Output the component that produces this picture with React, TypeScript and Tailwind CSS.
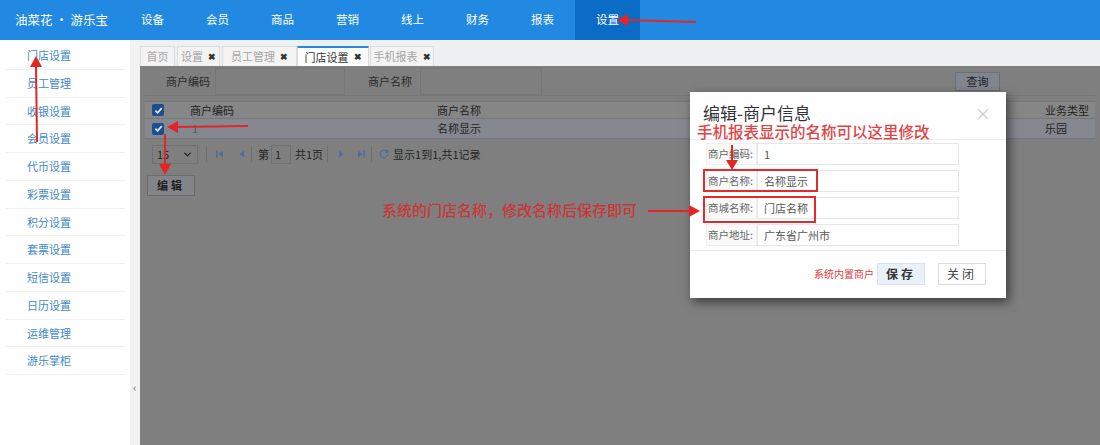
import React from 'react';
import { RotateCw, ChevronDown } from 'lucide-react';

const NAV = ['设备', '会员', '商品', '营销', '线上', '财务', '报表', '设置'];
const MENU = ['门店设置', '员工管理', '收银设置', '会员设置', '代币设置', '彩票设置', '积分设置', '套票设置', '短信设置', '日历设置', '运维管理', '游乐掌柜'];

const TABS = [
  { label: '首页', w: 'w-[35px]', close: false, active: false },
  { label: '设置', w: 'w-[43px]', close: true, active: false },
  { label: '员工管理', w: 'w-[75px]', close: true, active: false },
  { label: '门店设置', w: 'w-[72px]', close: true, active: true },
  { label: '手机报表', w: 'w-[64px]', close: true, active: false },
];

const FORM = [
  { label: '商户编码:', value: '1' },
  { label: '商户名称:', value: '名称显示' },
  { label: '商城名称:', value: '门店名称' },
  { label: '商户地址:', value: '广东省广州市' },
];

function Check() {
  return (
    <span className="w-[12px] h-[12px] rounded-[2px] bg-[#1d4e92] flex items-center justify-center">
      <svg width="9" height="9" viewBox="0 0 10 10">
        <path d="M1.5 5.2 L4 7.6 L8.6 2.4" stroke="#e8e8e8" strokeWidth="1.8" fill="none" />
      </svg>
    </span>
  );
}

function Tri({ dir, bar }: { dir: 'l' | 'r'; bar?: boolean }) {
  return (
    <svg width="10" height="10" viewBox="0 0 10 10">
      {dir === 'l' ? (
        <>
          {bar && <rect x="1" y="1.5" width="1.6" height="7" fill="#4f6f94" />}
          <polygon points="8,1.5 3.5,5 8,8.5" fill="#4f6f94" />
        </>
      ) : (
        <>
          <polygon points="2,1.5 6.5,5 2,8.5" fill="#4f6f94" />
          {bar && <rect x="7.4" y="1.5" width="1.6" height="7" fill="#4f6f94" />}
        </>
      )}
    </svg>
  );
}

export default function App() {
  return (
    <div className="relative w-[1100px] h-[445px] overflow-hidden bg-white font-['Noto_Sans_CJK_SC',sans-serif]">
      {/* 顶部导航 */}
      <header className="h-[40px] bg-[#2289e2] flex text-white">
        <div className="w-[120px] flex items-center pl-[15px] text-[12.5px]">油菜花 · 游乐宝</div>
        {NAV.map((n) => (
          <div
            key={n}
            className={`w-[65px] flex items-center justify-center text-[11.5px] ${n === '设置' ? 'bg-[#0b6cc6]' : ''}`}
          >
            {n}
          </div>
        ))}
      </header>

      <div className="flex h-[405px]">
        {/* 左侧菜单 */}
        <aside className="w-[130px] bg-white pt-[2px] px-[5px]">
          {MENU.map((m) => (
            <div key={m} className="h-[27.75px] border-b border-[#f1f1f1] flex items-center pl-[22px] text-[11px] text-[#4189c9]">
              {m}
            </div>
          ))}
        </aside>
        <div className="w-[10px] bg-[#f2f2f2] pt-[342px] text-[11px] text-[#666] leading-none pl-[3px]">‹</div>

        {/* 主体 */}
        <main className="flex-1 flex flex-col bg-[#eef0f2]">
          <div className="h-[26px] flex items-end">
            {TABS.map((t, i) => (
              <div
                key={t.label}
                className={`${t.w} h-[20px] flex items-center justify-center gap-[5px] text-[11px] border-x border-[#dcdcdc] ${
                  t.active ? 'bg-white border-t-2 border-t-[#2289e2] text-[#333]' : 'bg-[#f3f3f3] border-t border-t-[#dcdcdc] text-[#a5a5a5]'
                } ${i === 1 ? 'ml-[2px]' : ''} ${i === 2 ? 'ml-[2px]' : ''} ${i === 4 ? 'ml-[1px]' : ''}`}
              >
                <span>{t.label}</span>
                {t.close && <span className="text-[9px] font-bold text-[#333]">✖</span>}
              </div>
            ))}
          </div>

          {/* 内容区（遮罩状态） */}
          <div className="relative flex-1 bg-[#7f7f7f] text-[11px] text-[#222]">
            <div className="mt-[2px] mx-[5px] h-[28px] flex items-center border-b border-[#777]">
              <div className="w-[70px] h-full flex items-center justify-end pr-[5px] text-[#2a2a2a]">商户编码</div>
              <div className="w-[130px] h-full border border-[#757575]" />
              <div className="w-[75px] h-full flex items-center justify-end pr-[8px] text-[#2a2a2a]">商户名称</div>
              <div className="w-[122px] h-full border border-[#757575]" />
              <div className="flex-1" />
              <div className="w-[45px] h-[19px] mr-[95px] bg-[#808690] border border-[#6f6f6f] flex items-center justify-center text-[#1d1d1d]">查询</div>
            </div>

            <div className="mt-[5px] mx-[5px]">
              <div className="h-[18px] flex items-center bg-[#868686] border-y border-[#777]">
                <div className="w-[45px] pl-[7px]"><Check /></div>
                <div className="w-[247px]">商户编码</div>
                <div className="flex-1">商户名称</div>
                <div className="w-[50px]">业务类型</div>
              </div>
              <div className="h-[20px] flex items-center bg-[#858891] border-b border-[#777]">
                <div className="w-[45px] pl-[7px]"><Check /></div>
                <div className="w-[247px] pl-[2px] text-[#5d5d5d]">1</div>
                <div className="flex-1">名称显示</div>
                <div className="w-[50px]">乐园</div>
              </div>
            </div>

            <div className="mt-[4px] ml-[12px] h-[22px] flex items-center text-[#242424]">
              <div className="w-[46px] h-[19px] border border-[#707070] flex items-center justify-between px-[4px]">
                <span>15</span>
                <ChevronDown size={11} strokeWidth={3} color="#222" />
              </div>
              <div className="w-px h-[16px] bg-[#6e6e6e] ml-[8px]" />
              <div className="ml-[8px]"><Tri dir="l" bar /></div>
              <div className="ml-[11px]"><Tri dir="l" /></div>
              <div className="w-px h-[16px] bg-[#6e6e6e] ml-[5px]" />
              <span className="ml-[6px]">第</span>
              <div className="ml-[2px] w-[20px] h-[19px] border border-[#707070] flex items-center pl-[3px]">1</div>
              <span className="ml-[4px]">共1页</span>
              <div className="w-px h-[16px] bg-[#6e6e6e] ml-[4px]" />
              <div className="ml-[9px]"><Tri dir="r" /></div>
              <div className="ml-[9px]"><Tri dir="r" bar /></div>
              <div className="w-px h-[16px] bg-[#6e6e6e] ml-[5px]" />
              <RotateCw size={10} strokeWidth={3} color="#4f6f94" className="ml-[7px]" />
              <span className="ml-[4px]">显示1到1,共1记录</span>
            </div>

            <div className="mt-[10px] ml-[7px] w-[48px] h-[21px] bg-[#828488] border border-[#6b6b6b] flex items-center justify-center font-bold text-[#1e1e1e] tracking-[3px]">
              编辑
            </div>

            {/* 弹窗 */}
            <div className="absolute left-[550px] top-[26px] w-[316px] h-[206px] bg-white shadow-[3px_4px_10px_rgba(0,0,0,0.55)] flex flex-col">
              <div className="h-[48px] border-b border-[#ececec] flex items-start justify-between px-[13px] pt-[9px]">
                <span className="text-[17px] leading-[24px] text-[#333]">编辑-商户信息</span>
                <span className="text-[16px] leading-[24px] text-[#c8c8c8] mr-[2px]">×</span>
              </div>
              <div className="flex flex-col gap-[5px] pt-[3px] pl-[16px] h-[110px]">
                {FORM.map((f) => (
                  <div key={f.label} className="flex h-[22px]">
                    <div className="w-[51px] bg-[#fafafa] border border-[#efefef] flex items-center justify-end pr-[3px] text-[10.5px] text-[#666]">
                      {f.label}
                    </div>
                    <div className="w-[202px] border border-[#e6e6e6] flex items-center pl-[6px] text-[11px] text-[#555]">{f.value}</div>
                  </div>
                ))}
              </div>
              <div className="border-t border-[#ececec] flex-1 flex items-center justify-end pr-[20px] pb-[2px]">
                <span className="text-[10px] text-[#e03a3a] mr-[3px]">系统内置商户</span>
                <div className="w-[48px] h-[22px] bg-[#e9f1fb] border border-[#d9e2ee] flex items-center justify-center text-[12px] font-bold text-[#333] tracking-[3px]">保存</div>
                <div className="w-[48px] h-[22px] ml-[13px] bg-white border border-[#ddd] flex items-center justify-center text-[12px] text-[#444] tracking-[3px]">关闭</div>
              </div>

              {/* 红框标注 */}
              <div className="absolute left-[13px] top-[77px] w-[115px] h-[23px] border-2 border-[#e32b2b]" />
              <div className="absolute left-[13px] top-[104px] w-[113px] h-[27px] border-2 border-[#e32b2b]" />
              <div className="absolute left-[7px] top-[31px] text-[15.5px] leading-[20px] font-medium text-[#e04545] font-['Liberation_Serif','Noto_Sans_CJK_SC',serif]">
                手机报表显示的名称可以这里修改
              </div>
            </div>

            <div className="absolute left-[242px] top-[135px] text-[15px] leading-[20px] font-medium text-[#cc3636] font-['Liberation_Serif','Noto_Sans_CJK_SC',serif]">
              系统的门店名称，修改名称后保存即可
            </div>
          </div>
        </main>
      </div>

      {/* 红色箭头标注 */}
      <svg className="absolute inset-0 pointer-events-none" width="1100" height="445" viewBox="0 0 1100 445">
        <g stroke="#e42525" strokeWidth="2" fill="#e42525">
          <line x1="696" y1="22" x2="626" y2="20" />
          <polygon points="617,20 628,14 628,26" stroke="none" />
          <line x1="37" y1="142" x2="36" y2="66" />
          <polygon points="36,56 30,67 42,67" stroke="none" />
          <line x1="248" y1="126" x2="176" y2="127" />
          <polygon points="167,127 178,121 178,133" stroke="none" />
          <line x1="165" y1="134" x2="165" y2="166" />
          <polygon points="165,175 159,164 171,164" stroke="none" />
          <line x1="732" y1="145" x2="732" y2="161" />
          <polygon points="732,170 726,160 738,160" stroke="none" />
          <line x1="648" y1="211" x2="690" y2="211" />
          <polygon points="700,211 689,205 689,217" stroke="none" />
        </g>
      </svg>
    </div>
  );
}
